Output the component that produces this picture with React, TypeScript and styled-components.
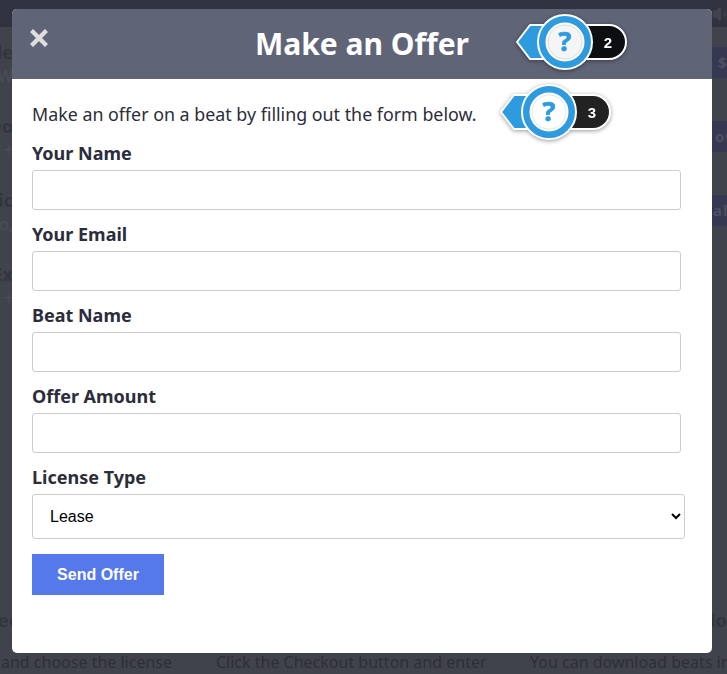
import React from "react";
import styled, { createGlobalStyle } from "styled-components";
import { Volume2 } from "lucide-react";

const Global = createGlobalStyle`
  html, body { margin: 0; padding: 0; background: #41434c; }
  * { box-sizing: border-box; }
`;

const Page = styled.div`
  position: relative;
  width: 727px;
  height: 674px;
  overflow: hidden;
  background: #41434c;
  color: #33353f;
  font-family: "Noto Sans", sans-serif;
`;
const TopBar = styled.div`
  height: 27px;
  background: #30333f;
  display: flex;
  justify-content: flex-end;
  align-items: center;
  color: #41434e;
  font-size: 12px;
  gap: 12px;
  svg { margin-right: -3px; }
`;
const Rows = styled.div`
  display: flex;
  flex-direction: column;
  height: 623px;
`;
const Row = styled.div`
  height: 74px;
  padding-top: 13px;
  display: flex;
  justify-content: space-between;
  align-items: flex-start;
`;
const RowText = styled.div`
  width: 13px;
  display: flex;
  flex-direction: column;
  align-items: flex-end;
  white-space: nowrap;
`;
const RowTitle = styled.div`
  font-size: 18px;
  line-height: 24px;
  font-weight: 700;
`;
const RowSub = styled.div`
  font-size: 16px;
  line-height: 24px;
  color: #4c4e58;
`;
const PriceButton = styled.div<{ $indent: number }>`
  width: 21px;
  height: 31px;
  margin-top: 7px;
  padding-left: ${(p) => p.$indent}px;
  background: #353850;
  color: #4d5062;
  font-size: 15px;
  line-height: 31px;
  font-weight: 700;
  letter-spacing: 1px;
  white-space: nowrap;
  overflow: hidden;
`;
const Steps = styled.div`
  position: relative;
  display: grid;
  grid-template-columns: 216px 314px 197px;
`;
const Step = styled.div`
  font-size: 16px;
  line-height: 24px;
  color: #2d2f38;
  white-space: nowrap;
`;
const StepFirst = styled(Step)`
  margin-left: 1px;
`;
const StepTitles = styled.div`
  position: absolute;
  top: -42px;
  left: -28px;
  width: 727px;
  font-size: 18px;
  line-height: 24px;
  font-weight: 700;
  color: #33353f;
  display: flex;
  gap: 633px;
  white-space: nowrap;
`;

const Overlay = styled.div`
  position: absolute;
  inset: 0;
  padding: 9px 15px 21px 12px;
`;
const Modal = styled.div`
  height: 100%;
  background: #fff;
  border-radius: 5px;
  overflow: hidden;
  color: #2b2d3a;
`;
const Header = styled.header`
  position: relative;
  height: 70px;
  background: #5f6477;
  display: flex;
  align-items: center;
  justify-content: center;
`;
const Title = styled.h1`
  margin: 0;
  color: #fff;
  font-size: 30px;
  line-height: 70px;
  font-weight: 700;
`;
const Close = styled.button`
  position: absolute;
  left: 14px;
  top: 15px;
  width: 26px;
  height: 28px;
  padding: 0;
  border: 0;
  background: none;
  color: #dedede;
  display: flex;
  align-items: center;
  justify-content: center;
`;
const Body = styled.div`
  padding: 22px 20px 0;
`;
const Intro = styled.p`
  margin: 0 0 13px;
  font-size: 17.84px;
  line-height: 26px;
`;
const Form = styled.form`
  display: flex;
  flex-direction: column;
`;
const Field = styled.label`
  display: block;
  margin-bottom: 11px;
`;
const LastField = styled(Field)`
  margin-bottom: 15px;
`;
const Label = styled.span`
  display: block;
  margin-bottom: 4px;
  font-size: 18px;
  line-height: 26px;
  font-weight: 700;
`;
const Input = styled.input`
  display: block;
  width: 649px;
  height: 40px;
  border: 1px solid #ccc;
  border-radius: 3px;
  background: #fff;
  outline: none;
`;
const Select = styled.select`
  display: block;
  width: 653px;
  height: 45px;
  padding: 0 13px;
  border: 1px solid #ccc;
  border-radius: 3px;
  background: #fff;
  color: #000;
  font-family: "Liberation Sans", Arial, sans-serif;
  font-size: 16px;
`;
const Submit = styled.button`
  width: 132px;
  height: 41px;
  border: 0;
  background: #5578ea;
  color: #fff;
  font-family: "Liberation Sans", Arial, sans-serif;
  font-size: 16px;
  font-weight: 700;
`;

const BadgeWrap = styled.svg<{ $left: number; $top: number }>`
  position: absolute;
  left: ${(p) => p.$left}px;
  top: ${(p) => p.$top}px;
  width: 116px;
  height: 60px;
  overflow: visible;
  filter: drop-shadow(0 1px 2px rgba(0, 0, 0, 0.4));
`;

function HelpBadge({ left, top, n, pill, face }: { left: number; top: number; n: string; pill: string; face: string }) {
  return (
    <BadgeWrap $left={left} $top={top} viewBox="0 0 116 60">
      <rect x="50" y="13" width="63" height="34" rx="17" fill={pill} stroke="#fff" strokeWidth="2" />
      <polygon points="4,30 17,13 52,13 52,47 17,47" fill="#2e9bdf" stroke="#fff" strokeWidth="2" strokeLinejoin="round" />
      <circle cx="52" cy="30" r="27" fill="#2e9bdf" stroke="#fff" strokeWidth="2" />
      <circle cx="52" cy="30" r="18.5" fill={face} stroke="#fff" strokeWidth="2" />
      <circle cx="52" cy="30" r="17" fill="none" stroke="#000" strokeOpacity="0.1" strokeWidth="1" />
      <text x="52" y="39" textAnchor="middle" fontFamily="'Noto Sans', sans-serif" fontWeight="700" fontSize="27" fill="#2e9bdf" stroke="#2e9bdf" strokeWidth="0.7">?</text>
      <text x="95" y="35.5" textAnchor="middle" fontFamily="'Liberation Sans', sans-serif" fontWeight="700" fontSize="15" fill="#fff">{n}</text>
    </BadgeWrap>
  );
}

const fields = ["Your Name", "Your Email", "Beat Name", "Offer Amount"];
const rows: [string, string, string, number][] = [
  ["Sale", "Now W", "$", 12],
  ["Do", "Do +", "ow", 9],
  ["Lic", "Info,", "al", 7],
  ["Ex", "Do +", "", 0],
];

export default function App() {
  return (
    <Page>
      <Global />
      <TopBar>
        00:00
        <Volume2 size={18} fill="currentColor" />
      </TopBar>
      <Rows>
        {rows.map(([t, s, b, indent]) => (
          <Row key={t}>
            <RowText>
              <RowTitle>{t}</RowTitle>
              <RowSub>{s}</RowSub>
            </RowText>
            {b && <PriceButton $indent={indent}>{b}</PriceButton>}
          </Row>
        ))}
      </Rows>
      <Steps>
        <StepTitles>
          <span>Select</span>
          <span>Download</span>
        </StepTitles>
        <StepFirst>and choose the license</StepFirst>
        <Step>Click the Checkout button and enter</Step>
        <Step>You can download beats in</Step>
      </Steps>
      <Overlay>
        <Modal>
          <Header>
            <Title>Make an Offer</Title>
            <Close type="button" aria-label="Close">
              <svg width="18" height="18" viewBox="0 0 18 18">
                <path d="M1.5 1.5 16.5 16.5M16.5 1.5 1.5 16.5" stroke="currentColor" strokeWidth="4.4" fill="none" />
              </svg>
            </Close>
          </Header>
          <Body>
            <Intro>Make an offer on a beat by filling out the form below.</Intro>
            <Form>
              {fields.map((f) => (
                <Field key={f}>
                  <Label>{f}</Label>
                  <Input type="text" />
                </Field>
              ))}
              <LastField>
                <Label>License Type</Label>
                <Select defaultValue="Lease">
                  <option>Lease</option>
                  <option>Exclusive</option>
                </Select>
              </LastField>
              <Submit type="button">Send Offer</Submit>
            </Form>
          </Body>
        </Modal>
      </Overlay>
      <HelpBadge left={513} top={12} n="2" pill="#0d0e10" face="#f5f5f5" />
      <HelpBadge left={497} top={82} n="3" pill="#222222" face="#ffffff" />
    </Page>
  );
}
